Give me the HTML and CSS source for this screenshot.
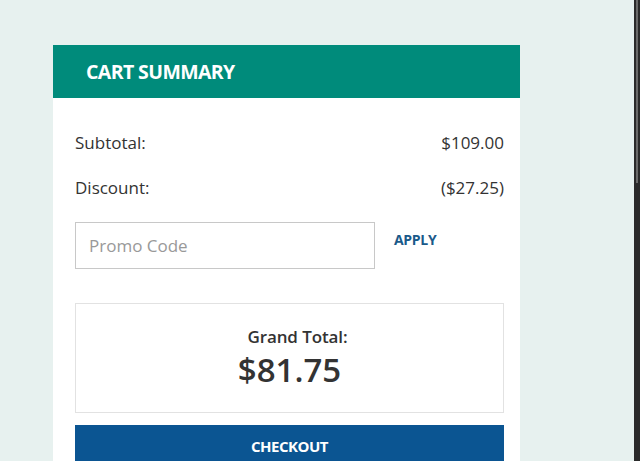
FILE: index.html
```html
<!DOCTYPE html>
<html lang="en">
<head>
    <meta charset="UTF-8">
    <meta name="viewport" content="width=device-width, initial-scale=1.0">
    <title>Cart Summary</title>
    <link rel="stylesheet" href="styles.css">
</head>
<body>
<div class="page">
    <div class="cart">
        <div class="cart-header">Cart Summary</div>
        <div class="cart-body">
            <div class="line">
                <span>Subtotal:</span>
                <span>$109.00</span>
            </div>
            <div class="line">
                <span>Discount:</span>
                <span>($27.25)</span>
            </div>
            <div class="promo">
                <input type="text" placeholder="Promo Code">
                <a href="#" class="apply">Apply</a>
            </div>
            <div class="grand">
                <div class="grand-label">Grand Total:</div>
                <div class="grand-value">$81.75</div>
            </div>
            <button class="checkout">Checkout</button>
        </div>
    </div>
</div>
<div class="scrollbar"><div class="thumb"></div></div>
</body>
</html>
```

FILE: styles.css
```css
html, body {
    height: 100%;
}

body {
    margin: 0;
    display: flex;
    overflow: hidden;
    background-color: #e7f1ef;
    font-family: "Open Sans", Arial, sans-serif;
    color: #333;
}

.page {
    flex: 1;
    padding: 45px 0 0 53px;
    overflow: hidden;
}

.cart {
    width: 467px;
    height: 416px;
    overflow: hidden;
    background-color: #fff;
}

.cart-header {
    height: 53px;
    line-height: 53px;
    padding-left: 33px;
    background-color: #008b7b;
    color: #fff;
    font-size: 19.5px;
    font-weight: 700;
    letter-spacing: -0.6px;
    text-transform: uppercase;
}

.cart-body {
    padding: 34px 16px 0 22px;
}

.line {
    display: flex;
    justify-content: space-between;
    font-size: 17px;
    line-height: 22px;
    margin-bottom: 23px;
}

.promo {
    display: flex;
    align-items: flex-start;
}

.promo input {
    width: 300px;
    height: 47px;
    box-sizing: border-box;
    padding: 0 13px;
    border: 1px solid #c8c8c8;
    font-family: inherit;
    font-size: 17px;
    color: #333;
    outline: none;
}

.promo input::placeholder {
    color: #999;
}

.apply {
    margin: 8px 0 0 19px;
    color: #1a5a8a;
    font-size: 14px;
    font-weight: 700;
    letter-spacing: -0.3px;
    text-transform: uppercase;
    text-decoration: none;
}

.grand {
    margin-top: 34px;
    height: 110px;
    box-sizing: border-box;
    border: 1px solid #e2e2e2;
    text-align: center;
    padding-top: 22px;
}

.grand-label {
    padding-left: 16px;
    font-size: 17px;
    line-height: 22px;
    font-weight: 600;
    letter-spacing: -0.1px;
}

.grand-value {
    font-size: 33px;
    line-height: 44px;
    font-weight: 600;
}

.checkout {
    display: block;
    width: 100%;
    height: 42px;
    margin-top: 12px;
    border: none;
    background-color: #0b5592;
    color: #fff;
    font-family: inherit;
    font-size: 15px;
    font-weight: 700;
    letter-spacing: -0.5px;
    text-transform: uppercase;
    cursor: pointer;
}

.scrollbar {
    width: 6px;
    background-color: #2a2a2a;
}

.thumb {
    width: 2px;
    height: 183px;
    margin-left: 2px;
    background-color: #6a6a6a;
}
```
